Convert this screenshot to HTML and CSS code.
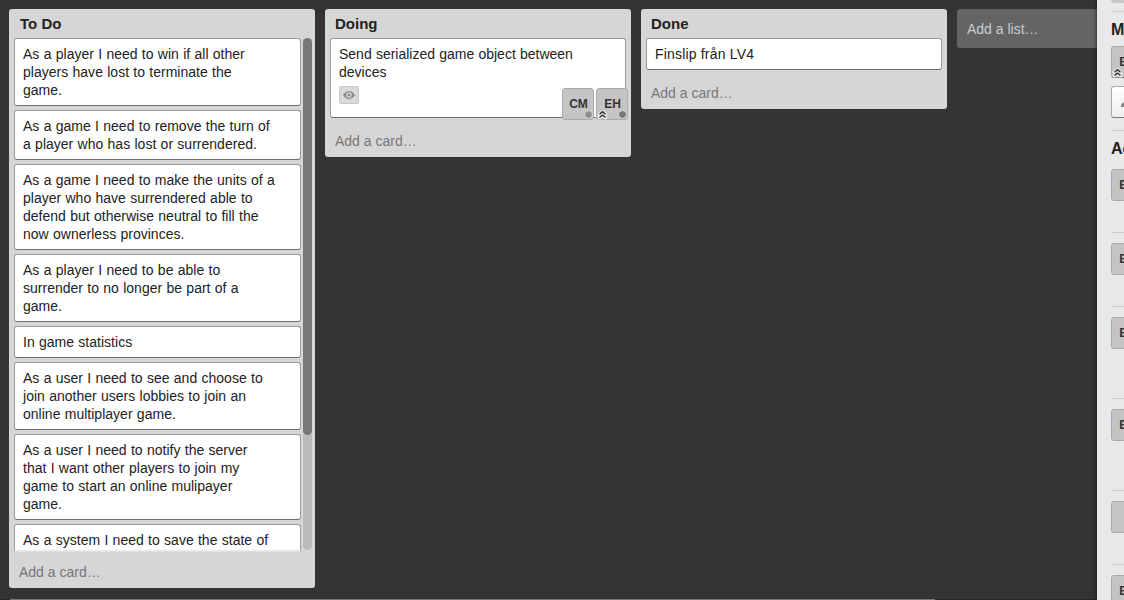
FILE: index.html
```html
<!DOCTYPE html>
<html lang="en">
<head>
<meta charset="utf-8">
<title>Board</title>
<link rel="stylesheet" href="styles.css">
</head>
<body>
<div class="app">
  <main class="board">
    <div class="lists">
      <section class="list">
        <h2 class="list-title">To Do</h2>
        <div class="scroll-area">
          <div class="cards">
            <article class="card">As a player I need to win if all other<br>players have lost to terminate the<br>game.</article>
            <article class="card">As a game I need to remove the turn of<br>a player who has lost or surrendered.</article>
            <article class="card">As a game I need to make the units of a<br>player who have surrendered able to<br>defend but otherwise neutral to fill the<br>now ownerless provinces.</article>
            <article class="card">As a player I need to be able to<br>surrender to no longer be part of a<br>game.</article>
            <article class="card">In game statistics</article>
            <article class="card">As a user I need to see and choose to<br>join another users lobbies to join an<br>online multiplayer game.</article>
            <article class="card">As a user I need to notify the server<br>that I want other players to join my<br>game to start an online mulipayer<br>game.</article>
            <article class="card">As a system I need to save the state of<br>the game in the current session.</article>
          </div>
          <div class="scrollbar"><div class="thumb"></div></div>
        </div>
        <a class="add-card add-card-scrolled">Add a card…</a>
      </section>

      <section class="list">
        <h2 class="list-title">Doing</h2>
        <article class="card card-members">Send serialized game object between devices
          <span class="badge"><svg width="12" height="8" viewBox="0 0 12 8"><path fill="#8c8c8c" fill-rule="evenodd" d="M0 4Q2.500 0 6 0T12 4Q9.500 8 6 8T0 4ZM6 1.300A2.700 2.700 0 1 0 6 6.700A2.700 2.700 0 1 0 6 1.300ZM6 2.500A1.500 1.500 0 1 1 6 5.500A1.500 1.500 0 1 1 6 2.500Z"/></svg></span>
          <div class="members">
            <span class="member">CM<i class="status"></i></span>
            <span class="member">EH<svg class="chevrons" width="9" height="9" viewBox="0 0 9 9"><path class="halo" d="M1.500 4.300L4.500 1.700L7.500 4.300M1.500 7.600L4.500 5L7.500 7.600"/><path class="stroke" d="M1.500 4.300L4.500 1.700L7.500 4.300M1.500 7.600L4.500 5L7.500 7.600"/></svg><i class="status status-on"></i></span>
          </div>
        </article>
        <a class="add-card">Add a card…</a>
      </section>

      <section class="list">
        <h2 class="list-title">Done</h2>
        <article class="card card-wide-text">Finslip från LV4</article>
        <a class="add-card">Add a card…</a>
      </section>

      <a class="add-list">Add a list…</a>
    </div>
    <div class="board-scroll"><div class="board-thumb"></div></div>
  </main>

  <aside class="sidebar">
    <div class="side-section side-top"><span class="side-button"></span></div>
    <div class="side-section side-members">
      <h3 class="side-title">Members</h3>
      <span class="member">EH<svg class="chevrons" width="9" height="9" viewBox="0 0 9 9"><path class="halo" d="M1.500 4.300L4.500 1.700L7.500 4.300M1.500 7.600L4.500 5L7.500 7.600"/><path class="stroke" d="M1.500 4.300L4.500 1.700L7.500 4.300M1.500 7.600L4.500 5L7.500 7.600"/></svg></span>
      <span class="add-member"><svg width="14" height="14" viewBox="0 0 14 14"><path fill="#888" d="M1 12V9.500Q2 8 4.500 7.500Q2.500 2 7 2T9.500 7.500Q12 8 13 9.500V12Z"/></svg></span>
    </div>
    <div class="side-section activity first">
      <h3 class="side-title">Activity</h3>
      <span class="member">EH</span>
    </div>
    <div class="side-section activity"><span class="member">EH</span></div>
    <div class="side-section activity tall"><span class="member">EH</span></div>
    <div class="side-section activity tall"><span class="member">EH</span></div>
    <div class="side-section activity"><span class="member"></span></div>
    <div class="side-section activity"><span class="member">EH</span></div>
  </aside>
</div>
</body>
</html>
```
FILE: styles.css
```css
* { box-sizing: border-box; }
body {
  margin: 0;
  overflow: hidden;
  background: #343434;
  color: #222;
  font: 14px/18px "Liberation Sans", Arial, sans-serif;
}
.app { display: flex; width: 1124px; height: 600px; overflow: hidden; }
.board { display: flex; flex-direction: column; width: 1097px; flex: none; overflow: hidden; }
.lists { display: flex; flex: 1; min-height: 0; align-items: flex-start; gap: 10px; padding: 9px 0 0 9px; }
.list {
  flex: none;
  width: 306px;
  padding: 0 5px;
  border-radius: 3px;
  background: #d6d6d6;
}
.list-title { height: 29px; margin: 0; padding: 6px 6px 0; font-size: 15px; line-height: 18px; }
.list + .list .list-title { padding-left: 5px; }
.scroll-area { position: relative; display: flex; gap: 2px; width: 298px; height: 515px; overflow: hidden; }
.scroll-area::after {
  content: "";
  position: absolute;
  left: 0;
  bottom: 0;
  width: 287px;
  height: 4px;
  background: linear-gradient(rgba(214, 214, 214, 0), #d6d6d6 85%);
}
.cards { display: flex; flex: none; flex-direction: column; gap: 4px; width: 287px; word-spacing: .37px; }
.card {
  flex: none;
  padding: 6px 24px 6px 8px;
  border: 1px solid #9c9c9c;
  border-bottom-color: #707070;
  border-radius: 3px;
  background: #fff;
}
.cards .card { padding-right: 8px; letter-spacing: .015px; white-space: nowrap; }
.card-wide-text { letter-spacing: .18px; }
.scrollbar { flex: none; width: 9px; height: 512px; border-radius: 5px; background: #bcbcbc; }
.thumb { height: 397px; border-radius: 5px; background: #787878; }
.add-card { display: block; height: 39px; padding: 14px 5px 0; color: #777; }
.add-card-scrolled { height: 35px; padding-top: 10px; }
.card-members { position: relative; width: 296px; height: 80px; word-spacing: .3px; }
.badge {
  display: flex;
  align-items: center;
  justify-content: center;
  width: 20px;
  height: 18px;
  margin-top: 5px;
  border: 1px solid #c8c8c8;
  border-radius: 2px;
  background: #d9d9d9;
}
.members { position: absolute; right: -3px; bottom: -3px; display: flex; gap: 2px; }
.member {
  position: relative;
  display: block;
  width: 32px;
  height: 32px;
  padding-left: 1px;
  border: 1px solid #aaa;
  border-radius: 3px;
  background: #c4c4c4;
  color: #333;
  font-size: 12px;
  font-weight: bold;
  line-height: 30px;
  text-align: center;
}
.status {
  position: absolute;
  right: 0;
  bottom: 0;
  width: 9px;
  height: 9px;
  border: 1px solid #ddd;
  border-radius: 50%;
  background: #909090;
}
.status-on { background: #777; }
.chevrons { position: absolute; left: 1px; bottom: 0; overflow: visible; }
.chevrons path { fill: none; }
.chevrons .halo { stroke: #eee; stroke-width: 3.500; stroke-linejoin: round; stroke-linecap: round; }
.chevrons .stroke { stroke: #222; stroke-width: 1.300; }
.add-list {
  flex: none;
  width: 160px;
  height: 39px;
  padding: 11px 10px;
  border-radius: 3px;
  background: #646464;
  color: #ccc;
}
.board-scroll { height: 1px; padding-left: 10px; background: #2b2326; }
.board-thumb { width: 925px; height: 1px; background: #777; }
.sidebar {
  position: relative;
  flex: none;
  width: 300px;
  padding-left: 14px;
  background: #e8e8e8;
  box-shadow: 0 0 4px rgba(0, 0, 0, .7);
}
.side-section { border-bottom: 1px solid #ccc; }
.side-top { height: 12px; }
.side-button { display: block; width: 250px; height: 3px; border-radius: 0 0 3px 3px; background: #c8c8c8; }
.side-title { margin: 0; font-size: 16px; line-height: 20px; }
.side-members { height: 119px; padding-top: 8px; }
.side-members .side-title { margin-bottom: 6px; }
.side-members .member { border-bottom-color: #888; }
.add-member {
  display: block;
  width: 32px;
  height: 32px;
  margin-top: 8px;
  padding: 8px;
  border: 1px solid #aaa;
  border-bottom-color: #777;
  border-radius: 3px;
  background: linear-gradient(#fff, #eee);
}
.activity { height: 74px; padding-top: 10px; }
.activity.first { height: 102px; padding-top: 8px; }
.first .side-title { margin-bottom: 10px; }
.activity.tall { height: 92px; }
```
